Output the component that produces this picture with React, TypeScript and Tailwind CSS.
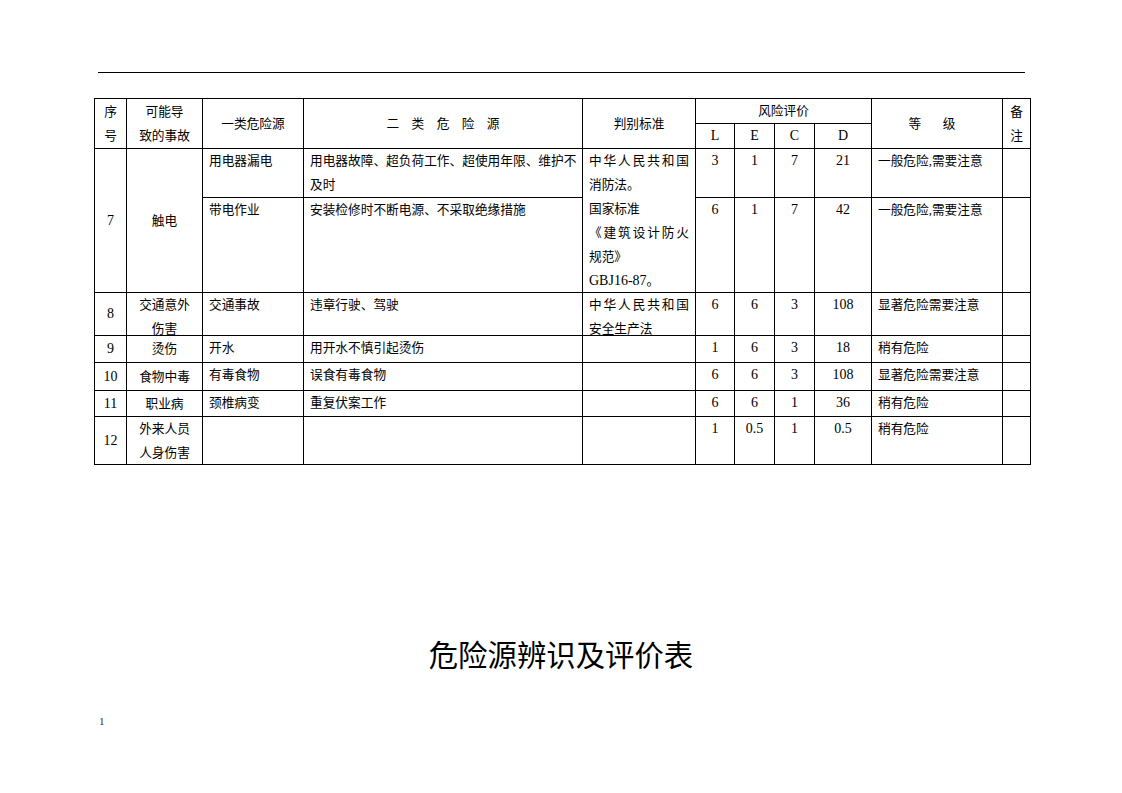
const grade = "一般危险,需要注意"

function Cell({ className = "", children }: { className?: string; children?: React.ReactNode }) {
  return <div className={`bg-white ${className}`}>{children}</div>
}

export default function App() {
  const left = "pl-[6px] pr-[2px] text-left"
  const num = "text-center text-[14px]"
  const mid = "flex flex-col items-center justify-center text-center"

  return (
    <div className="w-[1122px] h-[793px] bg-white text-black flex flex-col font-['Liberation_Serif','Noto_Sans_CJK_SC',serif]">
      <div className="ml-[98px] mt-[72px] w-[927px] h-px bg-black"></div>

      <div className="ml-[94px] mt-[25px] w-[937px] grid grid-cols-[31px_75px_100px_278px_112px_38px_39px_39px_56px_130px_27px] grid-rows-[24px_24px_48px_94px_42px_26px_27px_25px_47px] gap-px p-px bg-black text-[12.7px] leading-[24px]">
        {/* header */}
        <Cell className={`col-start-1 row-start-1 row-span-2 ${mid}`}>
          <span>序</span>
          <span>号</span>
        </Cell>
        <Cell className={`col-start-2 row-start-1 row-span-2 ${mid}`}>
          <span>可能导</span>
          <span>致的事故</span>
        </Cell>
        <Cell className={`col-start-3 row-start-1 row-span-2 ${mid}`}>一类危险源</Cell>
        <Cell className={`col-start-4 row-start-1 row-span-2 ${mid}`}>
          <span className="tracking-[12.4px] pl-[12.4px]">二类危险源</span>
        </Cell>
        <Cell className={`col-start-5 row-start-1 row-span-2 ${mid}`}>判别标准</Cell>
        <Cell className={`col-start-6 col-span-4 row-start-1 ${mid}`}>风险评价</Cell>
        <Cell className={`col-start-6 row-start-2 ${mid} text-[14px]`}>L</Cell>
        <Cell className={`col-start-7 row-start-2 ${mid} text-[14px]`}>E</Cell>
        <Cell className={`col-start-8 row-start-2 ${mid} text-[14px]`}>C</Cell>
        <Cell className={`col-start-9 row-start-2 ${mid} text-[14px]`}>D</Cell>
        <Cell className={`col-start-10 row-start-1 row-span-2 ${mid}`}>
          <div className="flex gap-[21.6px] pr-[10px]">
            <span>等</span>
            <span>级</span>
          </div>
        </Cell>
        <Cell className={`col-start-11 row-start-1 row-span-2 ${mid}`}>
          <span>备</span>
          <span>注</span>
        </Cell>

        {/* 7 */}
        <Cell className={`col-start-1 row-start-3 row-span-2 ${mid} text-[14px]`}>7</Cell>
        <Cell className={`col-start-2 row-start-3 row-span-2 ${mid}`}>触电</Cell>
        <Cell className={`col-start-3 row-start-3 ${left}`}>用电器漏电</Cell>
        <Cell className={`col-start-4 row-start-3 ${left} whitespace-nowrap`}>
          用电器故障、超负荷工作、超使用年限、维护不
          <br />
          及时
        </Cell>
        <Cell className="col-start-5 row-start-3 row-span-2 pl-[6px] pr-[6px]">
          <p className="text-justify">中华人民共和国消防法。</p>
          <p className="text-justify">国家标准</p>
          <p className="text-justify">《建筑设计防火规范》</p>
          <p className="text-justify">
            <span className="text-[14px]">GBJ16-87</span>。
          </p>
        </Cell>
        <Cell className={`col-start-6 row-start-3 ${num}`}>3</Cell>
        <Cell className={`col-start-7 row-start-3 ${num}`}>1</Cell>
        <Cell className={`col-start-8 row-start-3 ${num}`}>7</Cell>
        <Cell className={`col-start-9 row-start-3 ${num}`}>21</Cell>
        <Cell className={`col-start-10 row-start-3 ${left}`}>{grade}</Cell>
        <Cell className="col-start-11 row-start-3"></Cell>

        <Cell className={`col-start-3 row-start-4 ${left}`}>带电作业</Cell>
        <Cell className={`col-start-4 row-start-4 ${left}`}>安装检修时不断电源、不采取绝缘措施</Cell>
        <Cell className={`col-start-6 row-start-4 ${num}`}>6</Cell>
        <Cell className={`col-start-7 row-start-4 ${num}`}>1</Cell>
        <Cell className={`col-start-8 row-start-4 ${num}`}>7</Cell>
        <Cell className={`col-start-9 row-start-4 ${num}`}>42</Cell>
        <Cell className={`col-start-10 row-start-4 ${left}`}>{grade}</Cell>
        <Cell className="col-start-11 row-start-4"></Cell>

        {/* 8 */}
        <Cell className={`col-start-1 row-start-5 ${mid} text-[14px]`}>8</Cell>
        <Cell className="col-start-2 row-start-5 text-center">
          <div>交通意外</div>
          <div>伤害</div>
        </Cell>
        <Cell className={`col-start-3 row-start-5 ${left}`}>交通事故</Cell>
        <Cell className={`col-start-4 row-start-5 ${left}`}>违章行驶、驾驶</Cell>
        <Cell className="col-start-5 row-start-5 pl-[6px] pr-[6px]">
          <p className="text-justify">中华人民共和国安全生产法</p>
        </Cell>
        <Cell className={`col-start-6 row-start-5 ${num}`}>6</Cell>
        <Cell className={`col-start-7 row-start-5 ${num}`}>6</Cell>
        <Cell className={`col-start-8 row-start-5 ${num}`}>3</Cell>
        <Cell className={`col-start-9 row-start-5 ${num}`}>108</Cell>
        <Cell className={`col-start-10 row-start-5 ${left}`}>显著危险需要注意</Cell>
        <Cell className="col-start-11 row-start-5"></Cell>

        {/* 9 */}
        <Cell className={`col-start-1 row-start-6 ${mid} text-[14px]`}>9</Cell>
        <Cell className={`col-start-2 row-start-6 ${mid}`}>烫伤</Cell>
        <Cell className={`col-start-3 row-start-6 ${left}`}>开水</Cell>
        <Cell className={`col-start-4 row-start-6 ${left}`}>用开水不慎引起烫伤</Cell>
        <Cell className="col-start-5 row-start-6"></Cell>
        <Cell className={`col-start-6 row-start-6 ${num}`}>1</Cell>
        <Cell className={`col-start-7 row-start-6 ${num}`}>6</Cell>
        <Cell className={`col-start-8 row-start-6 ${num}`}>3</Cell>
        <Cell className={`col-start-9 row-start-6 ${num}`}>18</Cell>
        <Cell className={`col-start-10 row-start-6 ${left}`}>稍有危险</Cell>
        <Cell className="col-start-11 row-start-6"></Cell>

        {/* 10 */}
        <Cell className={`col-start-1 row-start-7 ${mid} text-[14px]`}>10</Cell>
        <Cell className={`col-start-2 row-start-7 ${mid}`}>食物中毒</Cell>
        <Cell className={`col-start-3 row-start-7 ${left}`}>有毒食物</Cell>
        <Cell className={`col-start-4 row-start-7 ${left}`}>误食有毒食物</Cell>
        <Cell className="col-start-5 row-start-7"></Cell>
        <Cell className={`col-start-6 row-start-7 ${num}`}>6</Cell>
        <Cell className={`col-start-7 row-start-7 ${num}`}>6</Cell>
        <Cell className={`col-start-8 row-start-7 ${num}`}>3</Cell>
        <Cell className={`col-start-9 row-start-7 ${num}`}>108</Cell>
        <Cell className={`col-start-10 row-start-7 ${left}`}>显著危险需要注意</Cell>
        <Cell className="col-start-11 row-start-7"></Cell>

        {/* 11 */}
        <Cell className={`col-start-1 row-start-8 ${mid} text-[14px]`}>11</Cell>
        <Cell className={`col-start-2 row-start-8 ${mid}`}>职业病</Cell>
        <Cell className={`col-start-3 row-start-8 ${left}`}>颈椎病变</Cell>
        <Cell className={`col-start-4 row-start-8 ${left}`}>重复伏案工作</Cell>
        <Cell className="col-start-5 row-start-8"></Cell>
        <Cell className={`col-start-6 row-start-8 ${num}`}>6</Cell>
        <Cell className={`col-start-7 row-start-8 ${num}`}>6</Cell>
        <Cell className={`col-start-8 row-start-8 ${num}`}>1</Cell>
        <Cell className={`col-start-9 row-start-8 ${num}`}>36</Cell>
        <Cell className={`col-start-10 row-start-8 ${left}`}>稍有危险</Cell>
        <Cell className="col-start-11 row-start-8"></Cell>

        {/* 12 */}
        <Cell className={`col-start-1 row-start-9 ${mid} text-[14px]`}>12</Cell>
        <Cell className="col-start-2 row-start-9 text-center">
          <div>外来人员</div>
          <div>人身伤害</div>
        </Cell>
        <Cell className="col-start-3 row-start-9"></Cell>
        <Cell className="col-start-4 row-start-9"></Cell>
        <Cell className="col-start-5 row-start-9"></Cell>
        <Cell className={`col-start-6 row-start-9 ${num}`}>1</Cell>
        <Cell className={`col-start-7 row-start-9 ${num}`}>0.5</Cell>
        <Cell className={`col-start-8 row-start-9 ${num}`}>1</Cell>
        <Cell className={`col-start-9 row-start-9 ${num}`}>0.5</Cell>
        <Cell className={`col-start-10 row-start-9 ${left}`}>稍有危险</Cell>
        <Cell className="col-start-11 row-start-9"></Cell>
      </div>

      <h1 className="mt-[168px] text-center text-[29.4px] leading-[40px] font-normal font-['Noto_Sans_CJK_SC',sans-serif]">
        危险源辨识及评价表
      </h1>

      <div className="ml-[99px] mt-[40px] text-[11px] leading-[16px] text-[#333]">1</div>
    </div>
  )
}
